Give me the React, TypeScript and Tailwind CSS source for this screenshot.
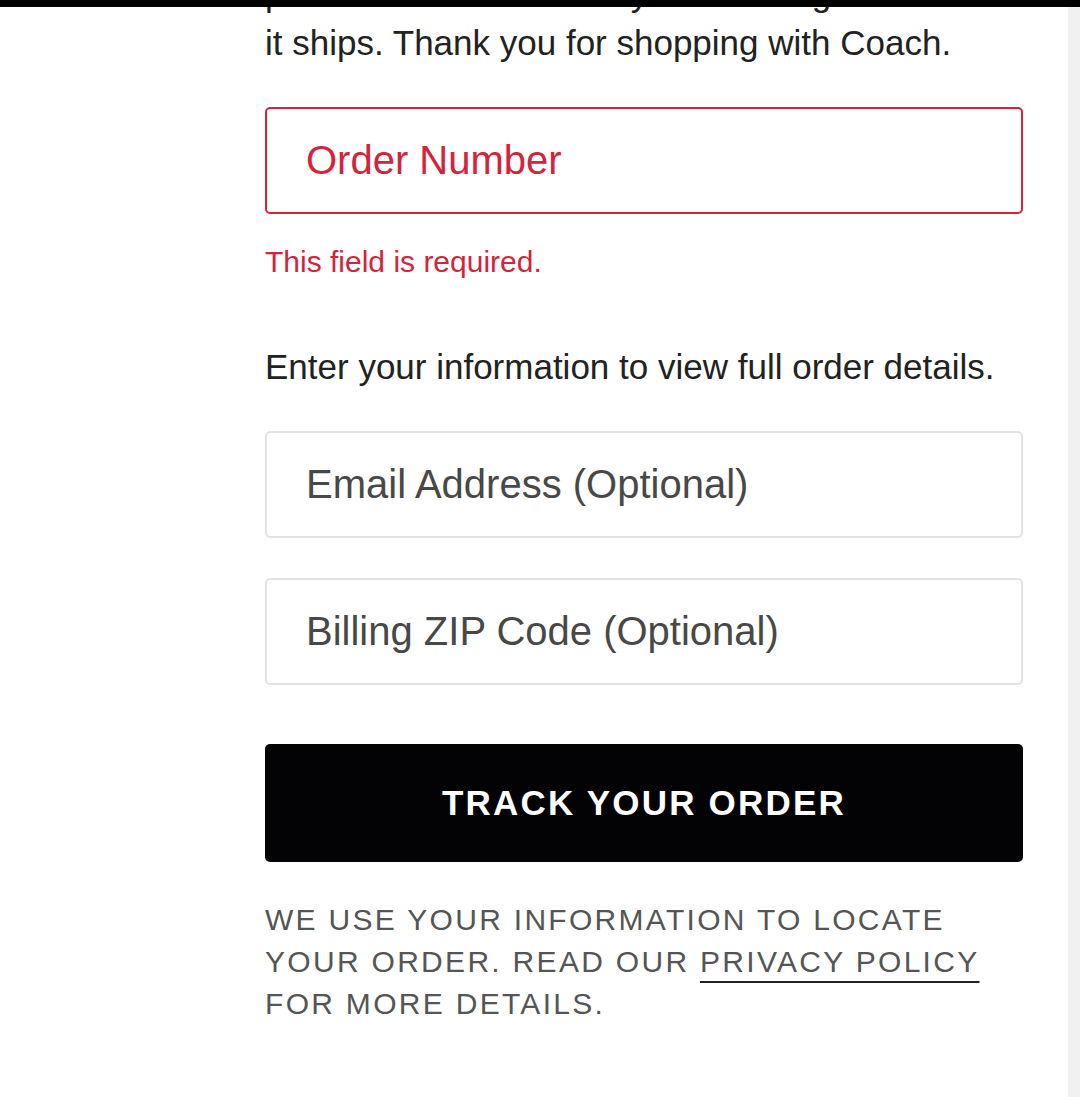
import { useState } from 'react'

const fieldBase =
  'h-[107px] w-full rounded-[5px] border-2 bg-white pl-[39px] pr-4 text-[40px] outline-none'

export default function App() {
  const [orderNumber, setOrderNumber] = useState('')
  const [email, setEmail] = useState('')
  const [zip, setZip] = useState('')

  return (
    <div
      className="relative flex min-h-screen overflow-hidden bg-white"
      style={{ fontFamily: '"Liberation Sans", Arial, sans-serif' }}
    >
      {/* sticky header edge */}
      <div className="absolute left-0 right-0 top-0 z-10 h-[7px] bg-black" />

      <main className="flex-1">
        <div className="ml-[265px] w-[758px] pb-20">
          <p className="-mt-[31px] text-[35px] leading-[49px] text-[#222]">
            placed. Check back for your tracking info once
            <br />
            it ships. Thank you for shopping with Coach.
          </p>

          <form className="mt-[40px]" onSubmit={e => e.preventDefault()}>
            <input
              value={orderNumber}
              onChange={e => setOrderNumber(e.target.value)}
              placeholder="Order Number"
              className={`${fieldBase} border-[#d4233c] text-[#d4233c] placeholder:text-[#d4233c]`}
            />
            <p className="mt-[30px] text-[30px] leading-[36px] text-[#d4233c]">
              This field is required.
            </p>

            <p className="mt-[62px] text-[35px] leading-[49px] text-[#222]">
              Enter your information to view full order details.
            </p>

            <div className="mt-[40px] flex flex-col gap-[40px]">
              <input
                value={email}
                onChange={e => setEmail(e.target.value)}
                placeholder="Email Address (Optional)"
                className={`${fieldBase} border-[#e3e3e3] text-[#333] placeholder:text-[#484848]`}
              />
              <input
                value={zip}
                onChange={e => setZip(e.target.value)}
                placeholder="Billing ZIP Code (Optional)"
                className={`${fieldBase} border-[#e3e3e3] text-[#333] placeholder:text-[#484848]`}
              />
            </div>

            <button
              type="submit"
              className="mt-[59px] flex h-[118px] w-full items-center justify-center rounded-[5px] bg-[#030306] text-[35px] font-bold tracking-[2.2px] text-white"
            >
              TRACK YOUR ORDER
            </button>
          </form>

          <p className="mt-[37px] text-[30px] leading-[42px] tracking-[2.3px] text-[#555]">
            WE USE YOUR INFORMATION TO LOCATE
            <br />
            YOUR ORDER. READ OUR{' '}
            <a
              href="#"
              className="text-[#555] underline decoration-[#222] decoration-2 underline-offset-[9px]"
            >
              PRIVACY POLICY
            </a>
            <br />
            FOR MORE DETAILS.
          </p>
        </div>
      </main>

      {/* scrollbar track */}
      <div className="w-[12px] shrink-0 bg-[#f1f1f1]" />
    </div>
  )
}
